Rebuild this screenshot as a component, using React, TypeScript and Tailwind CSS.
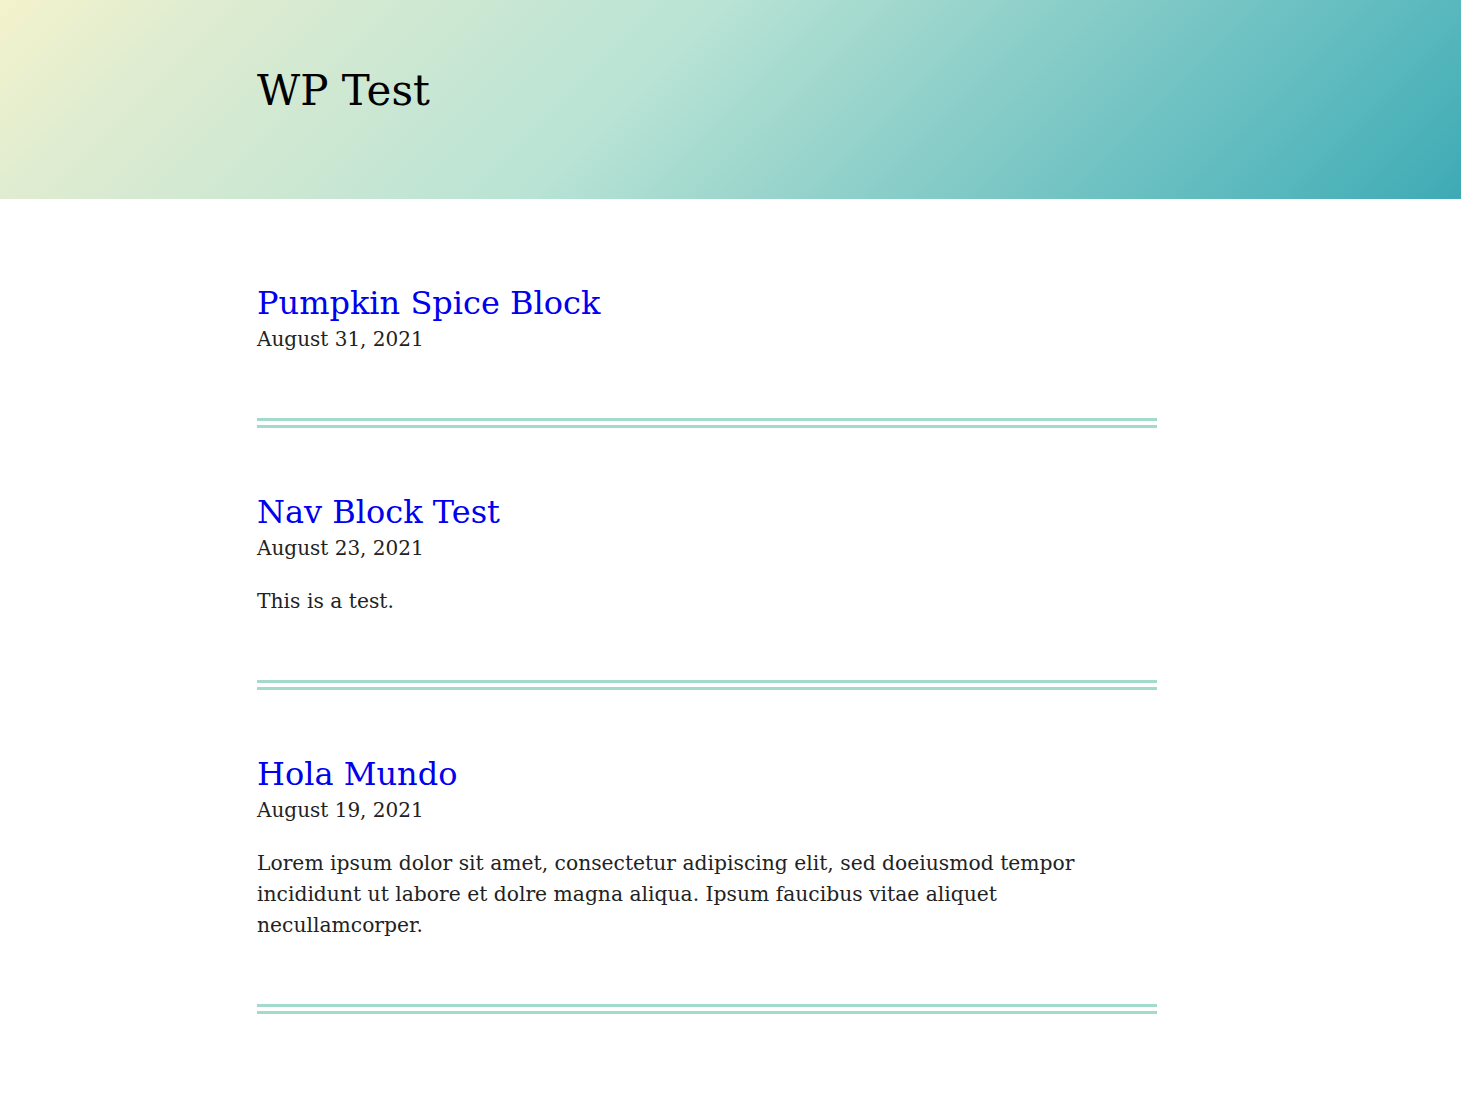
const posts = [
  { title: "Pumpkin Spice Block", date: "August 31, 2021", body: "" },
  { title: "Nav Block Test", date: "August 23, 2021", body: "This is a test." },
  {
    title: "Hola Mundo",
    date: "August 19, 2021",
    body: "Lorem ipsum dolor sit amet, consectetur adipiscing elit, sed doeiusmod tempor incididunt ut labore et dolre magna aliqua. Ipsum faucibus vitae aliquet necullamcorper.",
  },
];

const Separator = () => (
  <div className="flex flex-col gap-[4px]">
    <div className="h-[3px] bg-[#a2dbcc]" />
    <div className="h-[3px] bg-[#a2dbcc]" />
  </div>
);

export default function App() {
  return (
    <div className="min-h-screen bg-white font-['DejaVu_Serif',serif] text-[#111]">
      <header className="h-[199px] bg-[linear-gradient(135deg,#f4f3cc_0%,#e0ecd0_12%,#b8e3d5_44%,#9dd6cd_56%,#58b8bd_88%,#3eaab5_100%)] pl-[257px] pt-[65px]">
        <h1 className="text-[42px] leading-[52px] text-black">WP Test</h1>
      </header>
      <main className="pl-[257px] pt-[83px]">
        <div className="w-[900px] flex flex-col">
          {posts.map((p) => (
            <article key={p.title} className="flex flex-col">
              <h2 className="text-[32px] leading-[42px] text-[#0000ee]">{p.title}</h2>
              <p className="text-[20px] leading-[31px] font-light text-[#222]">{p.date}</p>
              {p.body && (
                <p className="mt-[22px] text-[20.3px] leading-[31px] font-light text-[#222]">{p.body}</p>
              )}
              <div className="mt-[63px] mb-[63px]">
                <Separator />
              </div>
            </article>
          ))}
        </div>
      </main>
    </div>
  );
}
